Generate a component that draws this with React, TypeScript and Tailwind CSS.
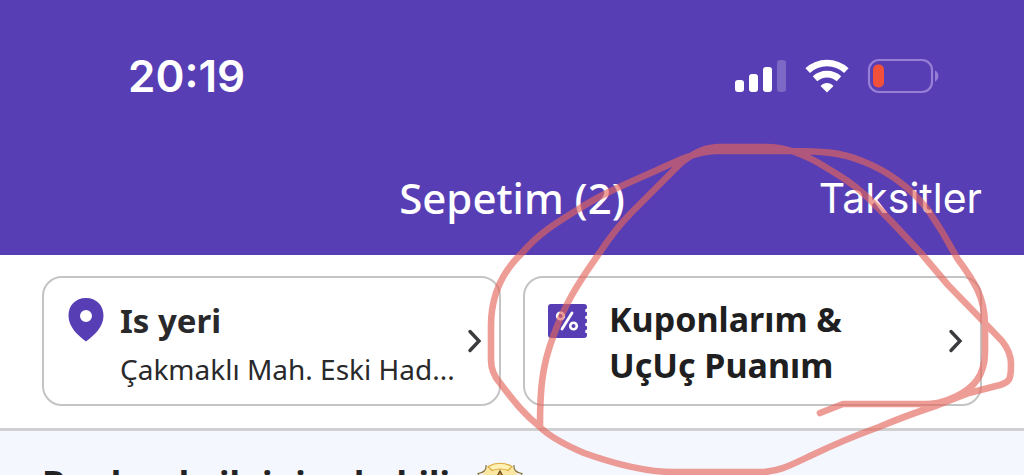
import type { ReactNode } from 'react';

function Chevron() {
  return (
    <svg className="h-6 w-4 shrink-0" viewBox="0 0 16 24" fill="none" stroke="#3b3b3f" strokeWidth="3.4" strokeLinecap="round" strokeLinejoin="miter" aria-hidden="true">
      <path d="M3 2.5 L12 12 L3 21.5" />
    </svg>
  );
}

function SignalIcon() {
  return (
    <svg className="h-9 w-[52px]" viewBox="0 0 52 36" fill="#fff" aria-hidden="true">
      <rect x="0" y="22" width="9" height="12" rx="3" />
      <rect x="14" y="16" width="9" height="18" rx="3" />
      <rect x="28" y="9" width="9" height="25" rx="3" />
      <rect x="42" y="2" width="9" height="32" rx="3" opacity="0.22" />
    </svg>
  );
}

function WifiIcon() {
  return (
    <svg className="h-9 w-11" viewBox="0 0 44 36" fill="none" stroke="#fff" strokeWidth="6.6" aria-hidden="true">
      <path d="M2.7 12.6 C13.5 2.4 30.5 2.4 41.3 12.6" />
      <path d="M10 20.8 C16.8 14.600 27.2 14.600 34 20.8" />
      <path d="M15.5 28 C19 24 25 24 28.500 28 L22 34.500 Z" fill="#fff" stroke="none" />
    </svg>
  );
}

function BatteryIcon() {
  return (
    <svg className="h-9 w-[72px]" viewBox="0 0 72 36" fill="none" aria-hidden="true">
      <rect x="2" y="2" width="63" height="32" rx="10" stroke="#9580d5" strokeWidth="2.200" />
      <rect x="6" y="6.500" width="11" height="23" rx="5" fill="#f2503b" />
      <path d="M68 12.500 C72.500 14.500 72.500 21.500 68 23.500 Z" fill="#9580d5" />
    </svg>
  );
}

function PinIcon() {
  return (
    <svg className="h-11 w-9 shrink-0" viewBox="0 0 36 44" aria-hidden="true">
      <path fillRule="evenodd" fill="#583eb5" d="M18 0 C7.500 0 .5 7.500 .5 17.500 C.5 29 9.500 37 18 43.500 C26.500 37 35.500 29 35.500 17.500 C35.500 7.500 28.500 0 18 0 Z M18 12 A6 6 0 1 1 18 24 A6 6 0 1 1 18 12 Z" />
    </svg>
  );
}

function CouponIcon() {
  return (
    <svg className="h-[34px] w-10 shrink-0" viewBox="0 0 40 34" aria-hidden="true">
      <path fill="#583eb5" d="M3 0 H36 Q39 0 39 3 L39 4.500 A1.900 1.900 0 0 0 39 8.300 V11.500 A1.900 1.900 0 0 0 39 15.300 V18.500 A1.900 1.900 0 0 0 39 22.300 V25.500 A1.900 1.900 0 0 0 39 29.300 V31 Q39 34 36 34 H3 Q0 34 0 31 V3 Q0 0 3 0 Z" />
      <g fill="none" stroke="#fff" strokeWidth="2.600">
        <circle cx="12.500" cy="12" r="3.300" />
        <circle cx="25.500" cy="22" r="3.300" />
        <path d="M24 9 L14 25" strokeLinecap="round" strokeWidth="2.800" />
      </g>
    </svg>
  );
}

function BadgeIcon() {
  return (
    <svg className="h-12 w-12" viewBox="0 0 48 48" aria-hidden="true">
      <path d="M11 5 Q24 -3 37 5 L40 11 Q47 17 47 27 Q44 46 24 47 Q4 46 1 27 Q1 17 8 11 Z" fill="#fbe6a2" />
      <path d="M12 4.500 Q24 -2 36 4.500 L32 8.500 Q24 5.500 16 8.500 Z" fill="#fff0b3" stroke="#dca83e" strokeWidth="1.200" />
      <path d="M10 3 Q11 10 2 11.500 Q4 14 1 20 M38 3 Q37 10 46 11.500 Q44 14 47 20" fill="none" stroke="#8a7440" strokeWidth="1.200" />
      <path d="M24 9 L30 20 H18 Z" fill="#d7952b" stroke="#70502b" strokeWidth="1.400" />
    </svg>
  );
}

function OptionCard({ icon, children }: { icon: ReactNode; children: ReactNode }) {
  return (
    <button type="button" className="flex h-[130px] min-w-0 flex-1 items-center rounded-[20px] border-2 border-[#c4c4c4] bg-white pr-4 pl-6 text-left">
      {icon}
      {children}
      <Chevron />
    </button>
  );
}

function Scribble() {
  return (
    <svg className="pointer-events-none absolute top-0 left-0 h-[475px] w-full" viewBox="0 0 1024 475" preserveAspectRatio="none" fill="none" aria-hidden="true">
      <path
        d="M540 425 C540 390 542 366 553 337 C564 306 576 286 598 255 C612 234 621 223 631 213 L681 163 C696 151 707 147 720 147 H766 C785 147 805 154 827 168 C845 179 853 184 865 195 C885 214 902 233 921 253 L948 285 L980 318 L1002 341 Q1011 352 1011 364 C1011 379 1010 382 1000 385 L969 393 L938 405 C914 413 898 419 879 427 C848 438 831 446 810 456 C787 467 779 471 764 472 H674 C651 472 623 467 584 453 C563 444 550 437 540 427 C525 415 515 403 500 383 Q491 373 491 360 V326 C491 292 504 270 522 253 C538 234 553 225 577 210 C600 195 621 186 653 172 C675 162 693 152 716 151 H790 C820 151 840 152 862 161 C888 171 910 187 928 210 C941 229 949 243 957 258 C975 282 985 298 985 325 V352 C985 376 973 388 957 396 C943 403 934 404 922 404 H843 L820 413"
        stroke="#e5665a"
        strokeOpacity="0.64"
        strokeWidth="6.600"
        strokeLinecap="round"
        strokeLinejoin="round"
      />
    </svg>
  );
}

export default function App() {
  return (
    <div className="relative h-screen overflow-hidden bg-white font-['Noto_Sans',sans-serif]">
      <header className="h-[255px] bg-[#583eb5] text-white">
        <div className="flex h-[152px] items-center justify-between pr-[85px] pl-32">
          <time className="font-['Inter',sans-serif] text-[44px] leading-[56px] font-semibold">20:19</time>
          <div className="flex items-center gap-[18px]">
            <SignalIcon />
            <WifiIcon />
            <BatteryIcon />
          </div>
        </div>
        <nav className="grid h-[92px] grid-cols-[1fr_auto_1fr] items-center px-[42px]">
          <h1 className="col-start-2 text-[42px] leading-[56px] font-medium">Sepetim (2)</h1>
          <a href="#taksitler" className="justify-self-end font-['Inter',sans-serif] text-[41px] leading-[56px]">Taksitler</a>
        </nav>
      </header>

      <section className="flex gap-[22px] border-b-[3px] border-[#d0d0d0] px-[42px] pt-[21px] pb-[22px]">
        <OptionCard icon={<span className="flex h-full items-start pt-5"><PinIcon /></span>}>
          <span className="ml-4 min-w-0 flex-1 pt-2 text-[#29292b]">
            <span className="block text-[33px] leading-[48px] font-bold">Is yeri</span>
            <span className="block text-[28px] leading-[48px] whitespace-nowrap">Çakmaklı Mah. Eski Had...</span>
          </span>
        </OptionCard>
        <OptionCard icon={<span className="-ml-px flex h-full items-start pt-[26px]"><CouponIcon /></span>}>
          <span className="ml-[21px] min-w-0 flex-1 pt-0.5 text-[34px] leading-[46px] font-bold text-[#1f1f21]">
            Kuponlarım &amp;<br />UçUç Puanım
          </span>
        </OptionCard>
      </section>

      <section className="flex h-24 items-start gap-[10px] bg-[#f5f7fe] pt-[31px] pl-[42px]">
        <h2 className="text-[35px] leading-[44px] font-bold whitespace-nowrap text-[#232326]">Bunlar da ilgini çekebilir</h2>
        <BadgeIcon />
      </section>
      <Scribble />
    </div>
  );
}
